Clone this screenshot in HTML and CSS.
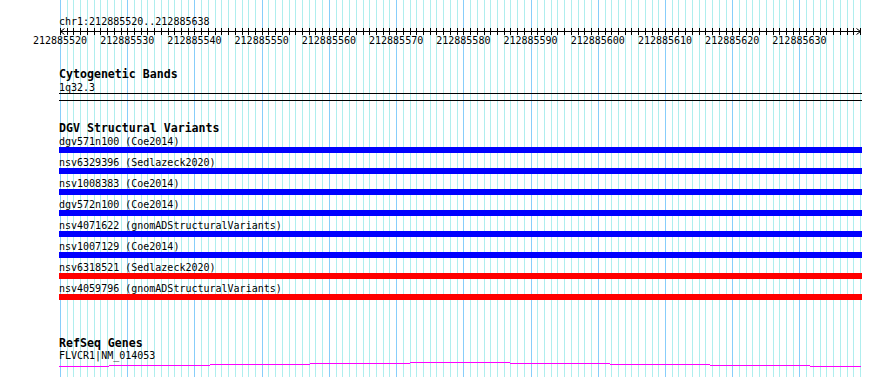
FILE: index.html
```html
<!DOCTYPE html>
<html lang="en">
<head>
    <meta charset="UTF-8">
    <meta name="viewport" content="width=device-width, initial-scale=1.0">
    <link rel="stylesheet" href="styles.css">
    <title>chr1:212885520..212885638</title>
</head>
<body>
    <div class="browser">
        <svg class="grid" id="grid" width="890" height="377"></svg>

        <div class="tracks">
            <div class="ruler">
                <div class="loc">chr1:212885520..212885638</div>
                <svg class="axis" id="axis" width="803" height="7"></svg>
                <div class="scale">
                    <span>212885520</span>
                    <span>212885530</span>
                    <span>212885540</span>
                    <span>212885550</span>
                    <span>212885560</span>
                    <span>212885570</span>
                    <span>212885580</span>
                    <span>212885590</span>
                    <span>212885600</span>
                    <span>212885610</span>
                    <span>212885620</span>
                    <span>212885630</span>
                </div>
            </div>

            <section class="track track-bands">
                <h2 class="track-title">Cytogenetic Bands</h2>
                <div class="label">1q32.3</div>
                <div class="band"></div>
            </section>

            <section class="track track-dgv">
                <h2 class="track-title">DGV Structural Variants</h2>
                <div class="feature">
                    <div class="label">dgv571n100 (Coe2014)</div>
                    <div class="bar"></div>
                </div>
                <div class="feature">
                    <div class="label">nsv6329396 (Sedlazeck2020)</div>
                    <div class="bar"></div>
                </div>
                <div class="feature">
                    <div class="label">nsv1008383 (Coe2014)</div>
                    <div class="bar"></div>
                </div>
                <div class="feature">
                    <div class="label">dgv572n100 (Coe2014)</div>
                    <div class="bar"></div>
                </div>
                <div class="feature">
                    <div class="label">nsv4071622 (gnomADStructuralVariants)</div>
                    <div class="bar"></div>
                </div>
                <div class="feature">
                    <div class="label">nsv1007129 (Coe2014)</div>
                    <div class="bar"></div>
                </div>
                <div class="feature">
                    <div class="label">nsv6318521 (Sedlazeck2020)</div>
                    <div class="bar bar-loss"></div>
                </div>
                <div class="feature">
                    <div class="label">nsv4059796 (gnomADStructuralVariants)</div>
                    <div class="bar bar-loss"></div>
                </div>
            </section>

            <section class="track track-genes">
                <h2 class="track-title">RefSeq Genes</h2>
                <div class="label">FLVCR1|NM_014053</div>
                <svg class="gene" width="803" height="6">
                    <path d="M0 5.5H50 M50 4.5H151 M151 3.5H251 M251 2.5H351 M351 1.5H451 M451 2.5H551 M551 3.5H651 M651 4.5H751 M751 5.5H802"/>
                </svg>
            </section>
        </div>
    </div>

    <script src="grid.js"></script>
</body>
</html>
```

FILE: styles.css
```css
*{
    box-sizing: border-box;
    margin: 0;
    padding: 0;
}
body{
    background: #fff;
    color: #000;
    font-family: "DejaVu Sans Mono", "Liberation Mono", monospace;
    font-size: 10px;
}

.browser{
    position: relative;
    width: 890px;
    height: 377px;
    overflow: hidden;
}

/* base pair grid sits under every track */
.grid{
    position: absolute;
    top: 0;
    left: 0;
    shape-rendering: crispEdges;
}
.grid .minor{
    stroke: #afeeee;
}
.grid .major{
    stroke: #87cefa;
}

.tracks{
    position: relative;
    width: 803px;
    margin-left: 59px;
}

/* ruler */
.ruler{
    padding-top: 16px;
}
.loc{
    line-height: 12px;
    height: 12px;
    white-space: nowrap;
}
.axis{
    display: block;
    stroke: #000;
    fill: none;
}
.axis .tick,
.axis .base{
    shape-rendering: crispEdges;
}
.scale{
    display: flex;
    margin-left: -32.6px;
    line-height: 12px;
    height: 12px;
}
.scale span{
    flex: 0 0 67.227px;
    text-align: center;
}

/* tracks */
.track-title{
    font-size: 11.6px;
    font-weight: bold;
    line-height: 12px;
    height: 12px;
    white-space: nowrap;
}
.label{
    line-height: 11px;
    height: 11px;
    white-space: nowrap;
}

.track-bands{
    margin-top: 21px;
}
.track-bands .label{
    margin-top: 2px;
}
.band{
    height: 8px;
    border-top: 1px solid #000;
    border-bottom: 1px solid #000;
}

.track-dgv{
    margin-top: 21px;
}
.feature{
    margin-bottom: 4px;
}
.feature:first-of-type{
    margin-top: 2px;
}
.bar{
    height: 6px;
    background: #00f;
}
.bar-loss{
    background: #f00;
}

/* the last feature's bottom margin collapses into this one */
.track-genes{
    margin-top: 37px;
}
.track-genes .label{
    margin-top: 1px;
}
.gene{
    display: block;
    fill: none;
    stroke: #f0f;
    shape-rendering: crispEdges;
}
```

FILE: grid.js
```js
// one grid line and one ruler tick per base
const NS = 'http://www.w3.org/2000/svg';
const START = 60, END = 860, BASES = 119;
const OFFSET = 59; // left edge of the tracks

const grid = document.getElementById('grid');
const axis = document.getElementById('axis');

function addLine(svg, x1, y1, x2, y2, cls){
    const l = document.createElementNS(NS, 'line');
    l.setAttribute('x1', x1);
    l.setAttribute('y1', y1);
    l.setAttribute('x2', x2);
    l.setAttribute('y2', y2);
    l.setAttribute('class', cls);
    svg.appendChild(l);
}

for(let i = 0; i <= BASES; i++){
    const x = Math.round(START + i * (END - START) / BASES) + 0.5;
    addLine(grid, x, 0, x, 377, i % 10 === 0 ? 'major' : 'minor');
    addLine(axis, x - OFFSET, 0, x - OFFSET, 7, 'tick');
}

// axis line with an arrow at both ends
const left = START - OFFSET + 0.5;
const right = END - OFFSET + 0.5;
addLine(axis, left, 3.5, right, 3.5, 'base');
const arrows = document.createElementNS(NS, 'path');
arrows.setAttribute('d',
    `M${left + 4} 0.5 L${left} 3.5 L${left + 4} 6.5 ` +
    `M${right - 4} 0.5 L${right} 3.5 L${right - 4} 6.5`);
axis.appendChild(arrows);
```
